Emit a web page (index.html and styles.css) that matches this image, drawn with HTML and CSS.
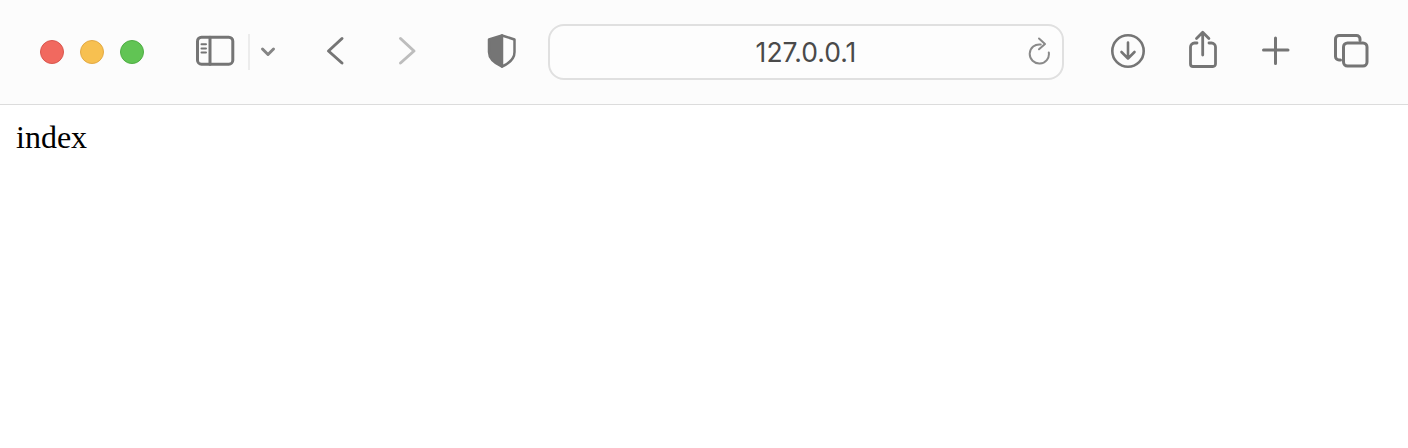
FILE: index.html
```html
<!DOCTYPE html>
<html lang="en">
<head>
    <meta charset="UTF-8">
    <title>index</title>
    <link rel="stylesheet" href="styles.css">
</head>
<body>
    <header class="toolbar">
        <div class="lights">
            <span class="light light-red"></span>
            <span class="light light-yellow"></span>
            <span class="light light-green"></span>
        </div>

        <svg class="icon icon-sidebar" viewBox="0 0 40 48">
            <rect x="2.5" y="9.2" width="35.3" height="27" rx="4"/>
            <path d="M15 9.2v27"/>
            <path class="thin" d="M6.5 16.3h4.5M6.5 20.4h4.5M6.5 24.5h4.5"/>
        </svg>
        <span class="divider"></span>
        <svg class="icon icon-menu" viewBox="0 0 16 48">
            <path d="M2.5 21l5.5 5.5 5.5-5.5"/>
        </svg>

        <svg class="icon icon-back" viewBox="0 0 30 48">
            <path d="M21 10.5L7.5 23 21 35"/>
        </svg>
        <svg class="icon icon-forward" viewBox="0 0 30 48">
            <path d="M8.5 10.5L22 23 8.500 35"/>
        </svg>

        <svg class="icon icon-shield" viewBox="0 0 32 48">
            <path class="solid" d="M16 7.5L3 11.500v12.500c0 6.500 5 11 13 14.500z"/>
            <path class="mid" d="M16 7.500l12.500 4v12.500c0 6.500-4.500 11-12.500 14.500"/>
        </svg>

        <div class="url-bar">
            <span class="url-text">127.0.0.1</span>
            <svg class="reload" viewBox="0 0 24 48">
                <path d="M14.700 16.500a9.600 9.600 0 1 0 8.100 8"/>
                <path d="M13 10.500l6 5.500-6 5.300"/>
            </svg>
        </div>

        <svg class="icon icon-download" viewBox="0 0 36 48">
            <circle cx="18" cy="23" r="15.700"/>
            <path d="M18 14.500v16M11.500 24l6.500 6.500 6.500-6.500"/>
        </svg>
        <svg class="icon icon-share" viewBox="0 0 32 48">
            <path d="M10 15H7.500a4 4 0 0 0-4 4v17a2.500 2.500 0 0 0 2.500 2.500h20a2.500 2.500 0 0 0 2.500-2.500V19a4 4 0 0 0-4-4H22"/>
            <path d="M15.700 27V5M9.500 10.500l6.200-6.200 6.200 6.200"/>
        </svg>
        <svg class="icon icon-plus" viewBox="0 0 30 48">
            <path d="M15.500 10v25.500M3.500 22h24.500"/>
        </svg>
        <svg class="icon icon-tabs" viewBox="0 0 36 48">
            <path d="M7.500 32H6a3.500 3.500 0 0 1-3.500-3.500V11A3.500 3.500 0 0 1 6 7.500h17.500a3.500 3.500 0 0 1 3.500 3.500v1.500"/>
            <rect x="10.500" y="15" width="23.500" height="23" rx="4"/>
        </svg>
    </header>

    <main class="page">index</main>
</body>
</html>
```

FILE: styles.css
```css
* { margin: 0; padding: 0; box-sizing: border-box; }
body {
    background: white;
    font-family: "Liberation Serif", serif;
    color: black;
}
.toolbar {
    display: flex;
    align-items: center;
    height: 105px;
    padding: 0 0 1px 40px;
    background: #fcfcfc;
    border-bottom: 1px solid #dcdcdc;
}
.lights {
    display: flex;
    gap: 16px;
}
.light {
    width: 24px;
    height: 24px;
    border-radius: 50%;
    border: 1px solid;
}
.light-red { background: #f1695f; border-color: #d9574e; }
.light-yellow { background: #f7c050; border-color: #e3aa45; }
.light-green { background: #61c454; border-color: #4fae44; }

.icon {
    flex: none;
    height: 48px;
    fill: none;
    stroke: #757575;
    stroke-width: 3;
    stroke-linecap: round;
    stroke-linejoin: round;
}
.icon-sidebar { width: 40px; margin-left: 51px; }
.icon-sidebar .thin { stroke-width: 2; }
.divider {
    width: 2px;
    height: 36px;
    margin-left: 13px;
    background: #ececec;
}
.icon-menu { width: 16px; margin-left: 10px; stroke: #858585; }
.icon-back { width: 30px; margin-left: 45px; }
.icon-forward { width: 30px; margin-left: 41px; stroke: #bdbdbd; }
.icon-shield { width: 32px; margin-left: 64px; stroke-width: 2.5; }
.icon-shield .solid { fill: #757575; }

.url-bar {
    flex: none;
    display: grid;
    grid-template-columns: 1fr auto 1fr;
    align-items: center;
    width: 516px;
    height: 56px;
    margin-left: 30px;
    padding: 0 12px;
    background: #fdfdfd;
    border: 2px solid #e0e0e0;
    border-radius: 16px;
}
.url-text {
    grid-column: 2;
    font-family: Inter, sans-serif;
    font-size: 26.5px;
    color: #4a4a4a;
}
.reload {
    grid-column: 3;
    justify-self: end;
    width: 24px;
    height: 48px;
    fill: none;
    stroke: #8a8a8a;
    stroke-width: 2;
    stroke-linecap: round;
    stroke-linejoin: round;
}

.icon-download { width: 36px; margin-left: 46px; stroke-width: 2.6; }
.icon-share { width: 32px; margin-left: 41px; stroke-width: 2.8; }
.icon-plus { width: 30px; margin-left: 41px; }
.icon-tabs { width: 36px; margin-left: 43px; }

.page {
    padding: 14px 16px;
    font-size: 32px;
}
```
